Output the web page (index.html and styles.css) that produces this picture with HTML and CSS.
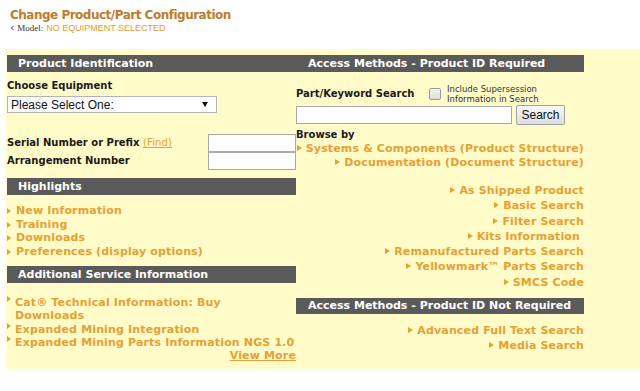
FILE: index.html
```html
<!DOCTYPE html>
<html lang="en">
<head>
    <meta charset="UTF-8">
    <title>Change Product/Part Configuration</title>
    <link rel="stylesheet" href="styles.css">
</head>
<body>
    <div class="top">
        <h1>Change Product/Part Configuration</h1>
        <div class="model"><span class="chev">&lsaquo;</span> <span class="model-label">Model:</span> <span class="model-value">NO EQUIPMENT SELECTED</span></div>
    </div>

    <div class="panel">
        <div class="col left">
            <h2 class="bar">Product Identification</h2>
            <div class="label choose">Choose Equipment</div>
            <div class="select">
                <span>Please Select One:</span>
                <span class="caret"></span>
            </div>
            <div class="row serial">
                <span class="label">Serial Number or Prefix <a class="find" href="#">(Find)</a></span>
                <span class="box"></span>
            </div>
            <div class="row">
                <span class="label">Arrangement Number</span>
                <span class="box"></span>
            </div>

            <h2 class="bar highlights">Highlights</h2>
            <ul class="links">
                <li><a href="#">New Information</a></li>
                <li><a href="#">Training</a></li>
                <li><a href="#">Downloads</a></li>
                <li><a href="#">Preferences (display options)</a></li>
            </ul>

            <h2 class="bar additional">Additional Service Information</h2>
            <ul class="links service">
                <li><a href="#">Cat&reg; Technical Information: Buy<br>Downloads</a></li>
                <li><a href="#">Expanded Mining Integration</a></li>
                <li><a href="#">Expanded Mining Parts Information NGS 1.0</a></li>
            </ul>
            <div class="more"><a href="#">View More</a></div>
        </div>

        <div class="col right">
            <h2 class="bar">Access Methods - Product ID Required</h2>
            <div class="keyword">
                <span class="label">Part/Keyword Search</span>
                <span class="check"></span>
                <span class="tiny">Include Supersession<br>Information in Search</span>
            </div>
            <div class="search">
                <span class="search-box"></span>
                <span class="btn">Search</span>
            </div>
            <div class="label browse">Browse by</div>
            <ul class="rlinks">
                <li><a href="#">Systems &amp; Components (Product Structure)</a></li>
                <li><a href="#">Documentation (Document Structure)</a></li>
            </ul>
            <ul class="rlinks wide">
                <li><a href="#">As Shipped Product</a></li>
                <li><a href="#">Basic Search</a></li>
                <li><a href="#">Filter Search</a></li>
                <li class="pad"><a href="#">Kits Information</a></li>
                <li><a href="#">Remanufactured Parts Search</a></li>
                <li><a href="#">Yellowmark&trade; Parts Search</a></li>
                <li><a href="#">SMCS Code</a></li>
            </ul>
            <h2 class="bar notreq">Access Methods - Product ID Not Required</h2>
            <ul class="rlinks wide last">
                <li><a href="#">Advanced Full Text Search</a></li>
                <li><a href="#">Media Search</a></li>
            </ul>
        </div>
    </div>
</body>
</html>
```

FILE: styles.css
```css
body {
    margin: 0;
    background: #ffffff;
    font-family: "DejaVu Sans", Verdana, sans-serif;
    color: #222222;
}

a {
    color: #e9a032;
    text-decoration: none;
    font-weight: bold;
    letter-spacing: 0.15px;
}

.top {
    padding: 7px 0 0 10px;
    height: 42px;
}

h1 {
    margin: 0;
    font-size: 12px;
    letter-spacing: -0.5px;
    line-height: 16px;
    color: #c27b2b;
}

.model {
    font-size: 9px;
    line-height: 9px;
}

.chev {
    font-size: 11px;
    color: #333333;
}

.model-label {
    font-family: "Liberation Serif", serif;
    color: #333333;
}

.model-value {
    font-family: "Liberation Sans", Arial, sans-serif;
    color: #e09a35;
}

.panel {
    margin-left: 6px;
    background: #fffcc9;
    height: 314px;
    padding: 6px 0 0 1px;
    display: flex;
}

.col.left {
    width: 289px;
}

.col.right {
    width: 288px;
}

.bar {
    margin: 0;
    height: 17px;
    line-height: 17px;
    background: #5a5a5a;
    color: #ffffff;
    font-size: 11px;
    white-space: nowrap;
    padding-left: 11px;
}

.col.right .bar {
    padding-left: 12px;
}

.label {
    font-size: 10px;
    font-weight: bold;
    line-height: 12px;
    color: #1a1a1a;
}

.choose {
    margin-top: 8px;
}

.select {
    margin-top: 4px;
    width: 205px;
    height: 15px;
    border: 1px solid #b5b5b5;
    background: #ffffff;
    display: flex;
    align-items: center;
    justify-content: space-between;
    padding: 0 0 0 3px;
    font-family: "Liberation Sans", Arial, sans-serif;
    font-size: 12px;
    color: #111111;
}

.caret {
    width: 0;
    height: 0;
    border-left: 3px solid transparent;
    border-right: 3px solid transparent;
    border-top: 5px solid #111111;
    margin-right: 8px;
}

.row {
    display: flex;
    align-items: center;
    justify-content: space-between;
    height: 18px;
}

.serial {
    margin-top: 21px;
}

.find {
    font-weight: normal;
    text-decoration: underline;
}

.box {
    width: 86px;
    height: 16px;
    border: 1px solid #a9a9a9;
    background: #ffffff;
}

.highlights {
    margin-top: 8px;
}

.links {
    list-style: none;
    margin: 9px 0 0;
    padding: 0;
    font-size: 11px;
    line-height: 13.7px;
}

.links li {
    position: relative;
    padding-left: 9px;
}

.links li::before {
    content: "";
    position: absolute;
    left: 0;
    top: 4px;
    border-left: 4px solid #e9a032;
    border-top: 3px solid transparent;
    border-bottom: 3px solid transparent;
}

.additional {
    margin-top: 7px;
}

.service {
    margin-top: 13px;
    line-height: 13.4px;
}

.service li {
    padding-left: 8px;
}

.service li::before {
    top: 0;
}

.more {
    text-align: right;
    font-size: 11px;
    line-height: 13px;
}

.more a {
    text-decoration: underline;
}

.keyword {
    display: flex;
    align-items: center;
    margin-top: 14px;
    height: 16px;
}

.keyword .label {
    width: 133px;
}

.check {
    width: 10px;
    height: 10px;
    border: 1px solid #9a9a9a;
    border-radius: 2px;
    background: linear-gradient(#f4f4f4, #dcdcdc);
    margin-right: 6px;
}

.tiny {
    font-size: 8.5px;
    line-height: 10px;
    color: #333333;
}

.search {
    display: flex;
    align-items: center;
    margin-top: 3px;
}

.search-box {
    width: 214px;
    height: 16px;
    border: 1px solid #a9a9a9;
    background: #ffffff;
}

.btn {
    margin-left: 4px;
    width: 47px;
    height: 18px;
    border: 1px solid #a0a0a0;
    border-radius: 2px;
    background: linear-gradient(#f8f8f8, #dedede);
    font-family: "Liberation Sans", Arial, sans-serif;
    font-size: 12px;
    line-height: 18px;
    text-align: center;
    color: #111111;
}

.browse {
    margin-top: 4px;
}

.rlinks {
    list-style: none;
    margin: 1px 0 0;
    padding: 0;
    text-align: right;
    font-size: 11px;
    line-height: 14px;
}

.rlinks li::before {
    content: "";
    display: inline-block;
    vertical-align: 1px;
    margin-right: 4px;
    border-left: 5px solid #e9a032;
    border-top: 3px solid transparent;
    border-bottom: 3px solid transparent;
}

.rlinks.wide {
    margin-top: 13px;
    line-height: 15.3px;
}

.rlinks .pad {
    padding-right: 4px;
}

.notreq {
    margin-top: 8px;
    height: 16px;
    line-height: 16px;
}

.rlinks.last {
    margin-top: 9px;
}
```
